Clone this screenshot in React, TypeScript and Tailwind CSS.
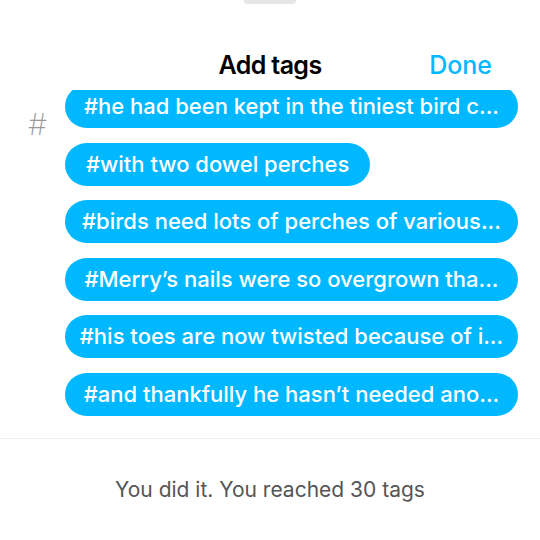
const tags = [
  { text: "#he had been kept in the tiniest bird c...", cut: true },
  { text: "#with two dowel perches", cut: false },
  { text: "#birds need lots of perches of various...", cut: true },
  { text: "#Merry’s nails were so overgrown tha...", cut: true },
  { text: "#his toes are now twisted because of i...", cut: true },
  { text: "#and thankfully he hasn’t needed ano...", cut: true },
]

export default function App() {
  return (
    <div className="w-[540px] h-[540px] bg-white overflow-hidden flex flex-col font-['Inter',sans-serif]">
      <div className="flex justify-center h-[5px]">
        <div className="w-[52px] h-[4px] bg-[#e6e6e6] rounded-b-md" />
      </div>

      <div className="h-[85px] grid grid-cols-[1fr_auto_1fr] items-center pt-[38px] pb-[2px]">
        <span />
        <span className="text-[25px] font-semibold text-black tracking-tight">Add tags</span>
        <span className="justify-self-end pr-[48px] text-[25px] font-medium text-[#00b8ff]">Done</span>
      </div>

      <div className="relative h-[349px] overflow-hidden border-b border-[#f0f0f0]">
        <span className="absolute left-[28px] top-[19px] text-[30px] leading-none text-[#9a9a9a] font-extralight">#</span>
        <div className="flex flex-col items-start gap-[14.5px] pl-[65px] mt-[-5px]">
          {tags.map((t) => (
            <div
              key={t.text}
              className={
                t.cut
                  ? "w-[453px] h-[43px] flex items-center justify-center rounded-full bg-[#00b8ff] text-white text-[22px] font-medium whitespace-nowrap"
                  : "h-[43px] flex items-center px-[21px] rounded-full bg-[#00b8ff] text-white text-[22px] font-medium whitespace-nowrap"
              }
            >
              {t.text}
            </div>
          ))}
        </div>
      </div>

      <div className="flex-1 flex items-start justify-center pt-[35px]">
        <span className="text-[21px] text-[#555555]">You did it. You reached 30 tags</span>
      </div>
    </div>
  )
}
